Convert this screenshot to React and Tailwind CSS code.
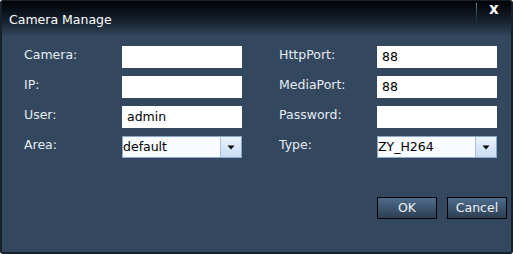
import React from "react";

const font = { fontFamily: '"DejaVu Sans", Verdana, sans-serif' };

function Field({ value = "" }) {
  return (
    <div className="w-[120px] h-[22px] bg-white flex items-center pl-[5px] text-[12.5px] text-black">
      {value}
    </div>
  );
}

function Select({ value }) {
  return (
    <div className="w-[120px] h-[22px] bg-[#f8fbff] border border-[#8aa8cc] flex items-stretch text-[12.5px] text-black">
      <div className="flex-1 flex items-center pl-[0px]">{value}</div>
      <div className="w-[21px] border-l border-[#a9c2df] bg-gradient-to-b from-[#eaf2fc] to-[#c9dcf3] flex items-center justify-center">
        <svg width="8" height="5" viewBox="0 0 8 5">
          <path d="M0.5 0.5 H7.5 L4 4.5 Z" fill="#000" />
        </svg>
      </div>
    </div>
  );
}

function Row({ label, children }) {
  return (
    <div className="flex items-center h-[22px]">
      <div className="text-[12.5px] text-[#e6ecf3] leading-none -mt-[4px]">{label}</div>
      <div className="ml-auto">{children}</div>
    </div>
  );
}

export default function App() {
  return (
    <div
      style={font}
      className="w-[513px] h-[254px] bg-[#33475e] border-l-2 border-r-2 border-b-2 border-t border-[#17212c] rounded-[3px] flex flex-col overflow-hidden"
    >
      <div className="h-[36px] shrink-0 bg-gradient-to-b from-[#020406] via-[#141e2a] to-[#33475e] flex items-start relative">
        <div className="pl-[7px] pt-[10px] text-[12.5px] text-white">Camera Manage</div>
        <div className="absolute left-[474px] top-[2px] w-[1px] h-[20px] bg-gradient-to-b from-[#5d7f9c] to-transparent" />
        <div className="absolute left-[487px] top-[1px] text-[15px] font-bold text-white leading-none">x</div>
      </div>
      <div className="flex pt-[9px] pl-[22px]">
        <div className="w-[218px] flex flex-col gap-[8px]">
          <Row label="Camera:"><Field /></Row>
          <Row label="IP:"><Field /></Row>
          <Row label="User:"><Field value="admin" /></Row>
          <Row label="Area:"><Select value="default" /></Row>
        </div>
        <div className="w-[218px] ml-[37px] flex flex-col gap-[8px]">
          <Row label="HttpPort:"><Field value="88" /></Row>
          <Row label="MediaPort:"><Field value="88" /></Row>
          <Row label="Password:"><Field /></Row>
          <Row label="Type:"><Select value="ZY_H264" /></Row>
        </div>
      </div>
      <div className="flex justify-end gap-[10px] pr-[4px] mt-[39px]">
        <button className="w-[60px] h-[22px] border border-black bg-gradient-to-b from-[#4e6c8c] to-[#2c3f53] text-[12.5px] text-[#eef2f6] flex items-center justify-center">
          OK
        </button>
        <button className="w-[60px] h-[22px] border border-black bg-gradient-to-b from-[#4e6c8c] to-[#2c3f53] text-[12.5px] text-[#eef2f6] flex items-center justify-center">
          Cancel
        </button>
      </div>
    </div>
  );
}
